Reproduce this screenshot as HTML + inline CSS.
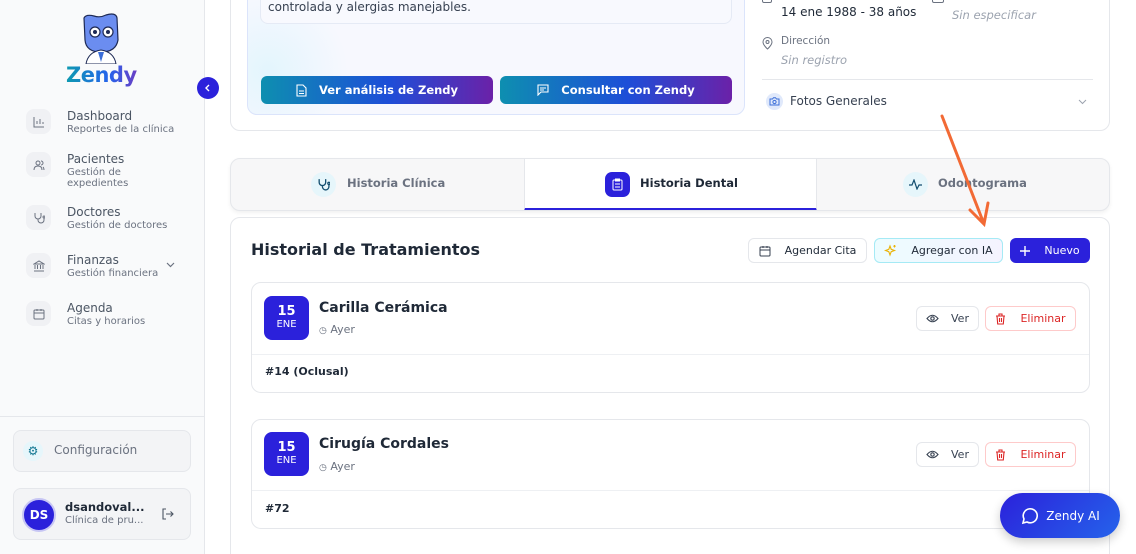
<!DOCTYPE html>
<html><head><meta charset="utf-8"><style>
*{box-sizing:border-box;margin:0;padding:0}
html,body{width:1136px;height:554px;overflow:hidden}
body{font-family:"DejaVu Sans","Liberation Sans",sans-serif;background:#fff;position:relative;color:#1f2937}
.abs{position:absolute}
.side{left:0;top:0;width:205px;height:554px;background:#f9fafb;border-right:1px solid #e5e7eb}
.nav{left:26px;width:175px;height:40px}
.nav .ic{position:absolute;left:0;top:0;width:25px;height:25px;border-radius:8px;background:#f0f1f4;display:flex;align-items:center;justify-content:center}
.nav .t{position:absolute;left:41px;top:0;font-size:12px;color:#4b5563}
.nav .s{position:absolute;left:41px;top:15px;font-size:10px;color:#6b7280;line-height:11px}
.card{border:1px solid #e5e7eb;border-radius:10px;background:#fff}
.btn{border-radius:6px;font-size:11.5px;display:flex;align-items:center;justify-content:center;gap:12px}
.grad{background:linear-gradient(90deg,#0e8fb0,#1d4ed8 55%,#6b21a8);color:#fff;font-weight:bold}
.date{width:45px;height:44px;border-radius:8px;background:#2b21db;color:#fff;text-align:center}
</style></head><body>
<div class="abs side"></div>
<svg class="abs" style="left:80px;top:12px" width="42" height="52" viewBox="0 0 42 52">
<path d="M4 6 Q6 2 14 4 Q20 6 26 3 Q36 0 37 6 L38 28 Q36 40 21 40 Q6 40 5 28Z" fill="#6b8df0" stroke="#1e2a55" stroke-width="1.2"/>
<circle cx="15" cy="20" r="5" fill="#fff" stroke="#1e2a55" stroke-width="1.2"/><circle cx="28" cy="20" r="5" fill="#fff" stroke="#1e2a55" stroke-width="1.2"/>
<circle cx="15" cy="20" r="2" fill="#1e2a55"/><circle cx="28" cy="20" r="2" fill="#1e2a55"/>
<path d="M6 52 Q8 40 21 38 Q34 40 36 52Z" fill="#fff" stroke="#1e2a55" stroke-width="1"/>
<path d="M18 40 L21 50 L24 40Z" fill="#3b6ed8"/>
</svg>
<div class="abs" style="left:66px;top:63px;font-size:21px;font-weight:bold;background:linear-gradient(90deg,#0e9ab0,#2563eb 60%,#6b3fc4);-webkit-background-clip:text;color:transparent;letter-spacing:-0.5px">Zendy</div>
<div class="abs" style="left:197px;top:77px;width:22px;height:22px;border-radius:50%;background:#2b21db;display:flex;align-items:center;justify-content:center"><svg width="8" height="8" viewBox="0 0 8 8" fill="none" stroke="#fff" stroke-width="1.4"><path d="M5 1L2 4l3 3"/></svg></div>

<div class="abs nav" style="top:109px"><div class="ic"><svg width="12" height="12" viewBox="0 0 12 12" fill="none" stroke="#6b7280"><path d="M1 1v10h10M4 8V5M7 8V3M10 8V6"/></svg></div><div class="t">Dashboard</div><div class="s">Reportes de la clínica</div></div>
<div class="abs nav" style="top:152px"><div class="ic"><svg width="12" height="12" viewBox="0 0 12 12" fill="none" stroke="#6b7280"><circle cx="5" cy="4" r="2"/><path d="M1 11q0-4 4-4t4 4M8 2a2 2 0 010 4M10 8q1 1 1 3"/></svg></div><div class="t">Pacientes</div><div class="s">Gestión de<br>expedientes</div></div>
<div class="abs nav" style="top:205px"><div class="ic"><svg width="12" height="12" viewBox="0 0 12 12" fill="none" stroke="#6b7280"><path d="M2 1v3a3 3 0 006 0V1M5 7v1a3 3 0 006 0V6"/><circle cx="11" cy="5" r="1"/></svg></div><div class="t">Doctores</div><div class="s">Gestión de doctores</div></div>
<div class="abs nav" style="top:253px"><div class="ic"><svg width="12" height="12" viewBox="0 0 12 12" fill="none" stroke="#6b7280"><path d="M1 4l5-3 5 3zM2 5v4M4.5 5v4M7.5 5v4M10 5v4M1 11h10"/></svg></div><div class="t">Finanzas</div><div class="s">Gestión financiera</div><svg style="position:absolute;left:140px;top:9px" width="9" height="6" viewBox="0 0 9 6" fill="none" stroke="#6b7280" stroke-width="1.2"><path d="M1 1l3.5 3.5L8 1"/></svg></div>
<div class="abs nav" style="top:301px"><div class="ic"><svg width="12" height="12" viewBox="0 0 12 12" fill="none" stroke="#6b7280"><rect x="1" y="2" width="10" height="9" rx="1"/><path d="M1 5h10M4 1v2M8 1v2"/></svg></div><div class="t">Agenda</div><div class="s">Citas y horarios</div></div>

<div class="abs" style="left:0;top:416px;width:204px;border-top:1px solid #e5e7eb"></div>
<div class="abs" style="left:13px;top:430px;width:178px;height:42px;border:1px solid #e5e7eb;border-radius:8px;background:#f3f4f6"></div>
<div class="abs" style="left:23px;top:441px;width:20px;height:20px;border-radius:50%;background:#e6f6fb;color:#0e7490;font-size:12px;text-align:center;line-height:20px">⚙</div>
<div class="abs" style="left:54px;top:443px;font-size:12px;color:#6b7280">Configuración</div>
<div class="abs" style="left:13px;top:488px;width:178px;height:52px;border:1px solid #e5e7eb;border-radius:8px;background:#f3f4f6"></div>
<div class="abs" style="left:22px;top:498px;width:34px;height:34px;border-radius:50%;background:#2b21db;border:2px solid #c7c6f4;color:#fff;font-weight:bold;font-size:12px;text-align:center;line-height:30px">DS</div>
<div class="abs" style="left:65px;top:500px;font-size:11.5px;font-weight:bold;color:#1f2937">dsandoval...</div>
<div class="abs" style="left:65px;top:515px;font-size:10px;color:#6b7280">Clínica de pru...</div>
<svg class="abs" style="left:161px;top:508px" width="13" height="12" viewBox="0 0 13 12" fill="none" stroke="#4b5563" stroke-width="1.1"><path d="M5 1H2v10h3M5 6h7M9.5 3.5L12 6 9.5 8.5"/></svg>

<div class="abs card" style="left:230px;top:-20px;width:880px;height:151px"></div>
<div class="abs" style="left:247px;top:-10px;width:498px;height:125px;border:1px solid #dbe4fb;border-radius:10px;background:radial-gradient(circle at 20px 80px,#e3f5fd,transparent 80px),#f7f8fe"></div>
<div class="abs" style="left:260px;top:-10px;width:472px;height:34px;border:1px solid #e5eaf5;border-radius:8px;background:#f8f9fe"></div>
<div class="abs" style="left:268px;top:0px;font-size:12px;color:#374151">controlada y alergias manejables.</div>
<div class="abs btn grad" style="left:261px;top:76px;width:232px;height:28px"><svg width="11" height="13" viewBox="0 0 11 13" fill="none" stroke="#fff" stroke-width="1.1"><path d="M1 1h6l3 3v8H1zM3 7h5M3 9.5h5"/></svg>Ver análisis de Zendy</div>
<div class="abs btn grad" style="left:500px;top:76px;width:232px;height:28px"><svg width="12" height="12" viewBox="0 0 12 12" fill="none" stroke="#fff" stroke-width="1.1"><path d="M1 1h10v7H4l-3 3zM3 4h6M3 6h4"/></svg>Consultar con Zendy</div>
<div class="abs" style="left:762px;top:-6px;width:10px;height:9px;border:1px solid #6b7280;border-radius:2px"></div>
<div class="abs" style="left:781px;top:5px;font-size:12px;color:#1f2937">14 ene 1988 - 38 años</div>
<div class="abs" style="left:932px;top:-6px;width:12px;height:9px;border:1px solid #6b7280;border-radius:2px"></div>
<div class="abs" style="left:952px;top:8px;font-size:11.5px;color:#9ca3af;font-style:italic">Sin especificar</div>
<svg class="abs" style="left:762px;top:37px" width="11" height="13" viewBox="0 0 11 13" fill="none" stroke="#6b7280"><path d="M5.5 12S1 8 1 5a4.5 4.5 0 019 0c0 3-4.5 7-4.5 7z"/><circle cx="5.5" cy="5" r="1.5"/></svg>
<div class="abs" style="left:781px;top:35px;font-size:10.5px;color:#6b7280">Dirección</div>
<div class="abs" style="left:781px;top:53px;font-size:11.5px;color:#9ca3af;font-style:italic">Sin registro</div>
<div class="abs" style="left:762px;top:79px;width:331px;border-top:1px solid #e5e7eb"></div>
<div class="abs" style="left:766px;top:93px;width:17px;height:17px;border-radius:50%;background:#e0e9fb;display:flex;align-items:center;justify-content:center"><svg width="11" height="9" viewBox="0 0 11 9" fill="none" stroke="#3b6ed8"><path d="M1 2h2.5l1-1.3h2L7.5 2H10v6H1z"/><circle cx="5.5" cy="5" r="1.6"/></svg></div>
<div class="abs" style="left:790px;top:94px;font-size:12px;color:#374151">Fotos Generales</div>
<svg class="abs" style="left:1078px;top:99px" width="9" height="6" viewBox="0 0 9 6" fill="none" stroke="#9ca3af"><path d="M1 1l3.5 3.5L8 1"/></svg>

<div class="abs" style="left:230px;top:158px;width:880px;height:53px;border:1px solid #e5e7eb;border-radius:10px;background:#f7f7f8;box-shadow:0 2px 4px rgba(0,0,0,.06);overflow:hidden">
<div style="position:absolute;left:293px;top:0;width:293px;height:52px;background:#fff;border-left:1px solid #e5e7eb;border-right:1px solid #e5e7eb;border-bottom:3px solid #2b21db"></div>
</div>
<div class="abs" style="left:311px;top:172px;width:25px;height:25px;border-radius:50%;background:#e6f6fb;display:flex;align-items:center;justify-content:center"><svg width="13" height="13" viewBox="0 0 12 12" fill="none" stroke="#134e6f" stroke-width="1.2"><path d="M2 1v3a3 3 0 006 0V1M5 7v1a3 3 0 006 0V6"/><circle cx="11" cy="5" r="1"/></svg></div>
<div class="abs" style="left:347px;top:176px;font-size:11.5px;font-weight:bold;color:#6b7280">Historia Clínica</div>
<div class="abs" style="left:605px;top:172px;width:25px;height:25px;border-radius:7px;background:#2b21db;display:flex;align-items:center;justify-content:center"><svg width="11" height="13" viewBox="0 0 11 13" fill="none" stroke="#fff"><rect x="1" y="2" width="9" height="10" rx="1"/><path d="M3.5 1h4v2h-4zM3 6h5M3 9h5"/></svg></div>
<div class="abs" style="left:640px;top:176px;font-size:11.5px;font-weight:bold;color:#1f2937">Historia Dental</div>
<div class="abs" style="left:903px;top:172px;width:25px;height:25px;border-radius:50%;background:#e6f6fb;display:flex;align-items:center;justify-content:center"><svg width="13" height="11" viewBox="0 0 13 11" fill="none" stroke="#134e6f" stroke-width="1.2"><path d="M0 6h3l2-5 3 9 2-4h3"/></svg></div>
<div class="abs" style="left:938px;top:176px;font-size:11.5px;font-weight:bold;color:#6b7280">Odontograma</div>

<div class="abs card" style="left:230px;top:217px;width:880px;height:360px"></div>
<div class="abs" style="left:251px;top:240px;font-size:16px;font-weight:bold;color:#1f2937">Historial de Tratamientos</div>
<div class="abs btn" style="left:748px;top:238px;width:119px;height:25px;border:1px solid #e5e7eb;background:#fff;color:#1f2937;font-size:11px;gap:14px"><svg width="12" height="12" viewBox="0 0 12 12" fill="none" stroke="#374151"><rect x="1" y="2" width="10" height="9" rx="1"/><path d="M1 5h10M4 1v2M8 1v2"/></svg>Agendar Cita</div>
<div class="abs btn" style="left:874px;top:238px;width:129px;height:25px;border:1px solid #a5eaf5;background:linear-gradient(90deg,#ecfcff,#f5f3ff);color:#1f2937;font-size:11px;gap:14px"><svg width="13" height="13" viewBox="0 0 13 13" fill="none" stroke="#eab308" stroke-width="1.1"><path d="M6 2l1.2 3.3L10.5 6.5 7.2 7.7 6 11 4.8 7.7 1.5 6.5 4.8 5.3z"/><path d="M10.5 1v2.5M9.3 2.2h2.4"/></svg>Agregar con IA</div>
<div class="abs btn" style="left:1010px;top:238px;width:80px;height:25px;background:#2b21db;color:#fff;font-size:11px;gap:14px"><svg width="10" height="10" viewBox="0 0 10 10" stroke="#fff" stroke-width="1.4"><path d="M5 0v10M0 5h10"/></svg>Nuevo</div>

<div class="abs card" style="left:251px;top:282px;width:839px;height:111px"></div>
<div class="abs" style="left:252px;top:354px;width:837px;border-top:1px solid #eef0f3"></div>
<div class="abs date" style="left:264px;top:296px"><div style="font-weight:bold;font-size:13px;margin-top:8px">15</div><div style="font-size:10px">ENE</div></div>
<div class="abs" style="left:319px;top:300px;font-size:14px;font-weight:bold;color:#1f2937">Carilla Cerámica</div>
<div class="abs" style="left:319px;top:323px;font-size:11px;color:#6b7280"><span style="font-size:9px">◷</span> Ayer</div>
<div class="abs btn" style="left:916px;top:306px;width:63px;height:25px;border:1px solid #e5e7eb;color:#374151;font-size:11px"><svg width="13" height="9" viewBox="0 0 13 9" fill="none" stroke="#374151" stroke-width="1.1"><path d="M1 4.5Q6.5-2 12 4.5Q6.5 11 1 4.5z"/><circle cx="6.5" cy="4.5" r="1.7"/></svg>Ver</div>
<div class="abs btn" style="left:985px;top:306px;width:91px;height:25px;border:1px solid #fecaca;color:#dc2626;font-size:11px;gap:14px"><svg width="11" height="12" viewBox="0 0 11 12" fill="none" stroke="#dc2626" stroke-width="1.1"><path d="M1 3h9M4 3V1h3v2M2 3l.7 8h5.6L9 3M4.5 5v4M6.5 5v4"/></svg>Eliminar</div>
<div class="abs" style="left:265px;top:365px;font-size:11px;font-weight:bold;color:#1f2937">#14 (Oclusal)</div>

<div class="abs card" style="left:251px;top:419px;width:839px;height:110px"></div>
<div class="abs" style="left:252px;top:490px;width:837px;border-top:1px solid #eef0f3"></div>
<div class="abs date" style="left:264px;top:432px"><div style="font-weight:bold;font-size:13px;margin-top:8px">15</div><div style="font-size:10px">ENE</div></div>
<div class="abs" style="left:319px;top:436px;font-size:14px;font-weight:bold;color:#1f2937">Cirugía Cordales</div>
<div class="abs" style="left:319px;top:460px;font-size:11px;color:#6b7280"><span style="font-size:9px">◷</span> Ayer</div>
<div class="abs btn" style="left:916px;top:442px;width:63px;height:25px;border:1px solid #e5e7eb;color:#374151;font-size:11px"><svg width="13" height="9" viewBox="0 0 13 9" fill="none" stroke="#374151" stroke-width="1.1"><path d="M1 4.5Q6.5-2 12 4.5Q6.5 11 1 4.5z"/><circle cx="6.5" cy="4.5" r="1.7"/></svg>Ver</div>
<div class="abs btn" style="left:985px;top:442px;width:91px;height:25px;border:1px solid #fecaca;color:#dc2626;font-size:11px;gap:14px"><svg width="11" height="12" viewBox="0 0 11 12" fill="none" stroke="#dc2626" stroke-width="1.1"><path d="M1 3h9M4 3V1h3v2M2 3l.7 8h5.6L9 3M4.5 5v4M6.5 5v4"/></svg>Eliminar</div>
<div class="abs" style="left:265px;top:502px;font-size:11px;font-weight:bold;color:#1f2937">#72</div>

<div class="abs" style="left:1000px;top:493px;width:120px;height:45px;border-radius:23px;background:linear-gradient(135deg,#2b21db,#2563eb);box-shadow:0 4px 10px rgba(0,0,0,.2);color:#fff;font-size:12px;display:flex;align-items:center;justify-content:center;gap:8px"><svg width="18" height="18" viewBox="0 0 18 18" fill="none" stroke="#fff" stroke-width="1.6"><path d="M3 16l1-4a7 7 0 113 3z"/></svg>Zendy AI</div>

<svg class="abs" style="left:930px;top:110px" width="70" height="125"><path d="M12 6 L54 114 M40 100 L54 114 L58 93" fill="none" stroke="#f26a35" stroke-width="3" stroke-linecap="round"/></svg>
</body></html>
